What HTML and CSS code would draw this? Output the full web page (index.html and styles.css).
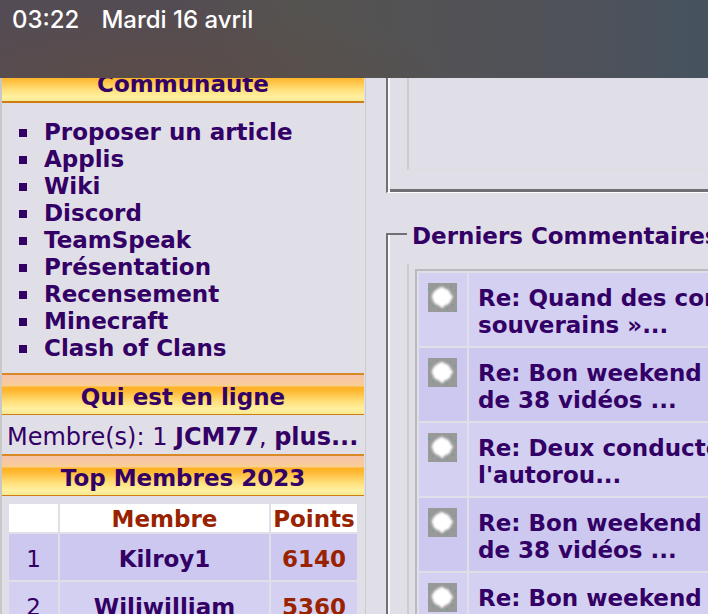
FILE: index.html
```html
<!DOCTYPE html>
<html lang="fr">
<head>
<meta charset="utf-8">
<meta name="viewport" content="width=device-width">
<title>Communauté</title>
<link rel="stylesheet" href="styles.css">
</head>
<body>
<header class="status"><time>03:22</time><span>Mardi 16 avril</span></header>
<div class="page">
  <aside class="sidebar">
    <h2 class="bar">Communauté</h2>
    <ul class="menu">
      <li><a href="#">Proposer un article</a></li>
      <li><a href="#">Applis</a></li>
      <li><a href="#">Wiki</a></li>
      <li><a href="#">Discord</a></li>
      <li><a href="#">TeamSpeak</a></li>
      <li><a href="#">Présentation</a></li>
      <li><a href="#">Recensement</a></li>
      <li><a href="#">Minecraft</a></li>
      <li><a href="#">Clash of Clans</a></li>
    </ul>
    <h2 class="bar">Qui est en ligne</h2>
    <p class="online">Membre(s): 1 <a href="#">JCM77</a>, <a href="#">plus...</a></p>
    <h2 class="bar">Top Membres 2023</h2>
    <table class="top">
      <thead><tr><th class="rank"></th><th>Membre</th><th class="points">Points</th></tr></thead>
      <tbody>
        <tr><td>1</td><td><a href="#">Kilroy1</a></td><td class="score">6140</td></tr>
        <tr><td>2</td><td><a href="#">Wiliwilliam</a></td><td class="score">5360</td></tr>
      </tbody>
    </table>
  </aside>
  <main class="content">
    <section class="panel first"><div class="inner"></div></section>
    <fieldset class="panel">
      <legend>Derniers Commentaires</legend>
      <div class="inner">
        <table class="comments">
          <tbody>
            <tr><td class="mark"><svg viewBox="0 0 29 29"><use href="#star"/></svg></td><td><a href="#">Re: Quand des con<br>souverains »...</a></td></tr>
            <tr><td class="mark"><svg viewBox="0 0 29 29"><use href="#star"/></svg></td><td><a href="#">Re: Bon weekend<br>de 38 vidéos ...</a></td></tr>
            <tr><td class="mark"><svg viewBox="0 0 29 29"><use href="#star"/></svg></td><td><a href="#">Re: Deux conducte<br>l'autorou...</a></td></tr>
            <tr><td class="mark"><svg viewBox="0 0 29 29"><use href="#star"/></svg></td><td><a href="#">Re: Bon weekend<br>de 38 vidéos ...</a></td></tr>
            <tr><td class="mark"><svg viewBox="0 0 29 29"><use href="#star"/></svg></td><td><a href="#">Re: Bon weekend</a></td></tr>
          </tbody>
        </table>
      </div>
    </fieldset>
  </main>
</div>
<svg class="defs" width="0" height="0">
  <defs>
    <filter id="soft"><feGaussianBlur stdDeviation="0.8"/></filter>
    <symbol id="star" viewBox="0 0 29 29">
      <rect width="29" height="29" fill="#999"/>
      <g fill="#7a9c9a"><path d="M0 5h2v2H0zM4 22h2v2H4zM22 3h2v2h-2zM26 7h2v2h-2zM27 27h2v2h-2zM10 25h1v2h-1zM18 25h2v2h-2zM1 19h1v2H1zM24 21h2v2h-2zM8 2h2v1H8z"/></g>
      <path d="M14 4l3 2 3 1 2 3 1 2 2 2-2 2-1 3-2 2-3 1-3 3-3-3-3-1-2-2-1-3-1-2 1-3 2-3 3-2z" fill="#fff" stroke="#eee" filter="url(#soft)"/>
    </symbol>
  </defs>
</svg>
</body>
</html>
```
FILE: styles.css
```css
* { box-sizing: border-box; }
html { overflow: hidden; }
body {
  margin: 0;
  height: 100vh;
  overflow: hidden;
  background: #e0dee7;
  color: #330066;
  font: 23px/27px Verdana, "DejaVu Sans", sans-serif;
}
a { color: inherit; font-weight: bold; text-decoration: none; }
.status {
  position: fixed;
  inset: 0 0 auto;
  z-index: 1;
  display: flex;
  gap: 22px;
  height: 78px;
  padding: 6px 12px;
  color: #fff;
  font-family: Inter, sans-serif;
  font-size: 24px;
  font-weight: 500;
  background:
    radial-gradient(ellipse 45% 100% at 20% 100%, rgba(92, 76, 70, .8), transparent),
    linear-gradient(to right, #534c56, #544c53 25%, #555350 42%, #525256 65%, #4e525a 85%, #45535f);
}
.page { display: flex; padding-top: 61px; }
.sidebar {
  flex: 0 0 366px;
  min-height: 100vh;
  border-left: 2px solid #c8c8c8;
  border-right: 1px solid #ccc;
  padding-right: 1px;
}
.bar {
  margin: 0;
  height: 42px;
  padding-top: 9px;
  border-top: 2px solid #d98a26;
  border-bottom: 1px solid #cf7d12;
  background: linear-gradient(#f6c3a9, #f7cb9d 8px, #f9cf91 11px, #ffb223 12px, #ffb832 16px, #ffe07c 27px, #fff0a0 34px, #f5e991 39px);
  text-align: center;
  font-size: 23px;
}
.bar:first-child { padding-top: 8px; border-bottom-width: 2px; }
.menu {
  margin: 0;
  padding: 16px 0 11px 42px;
  list-style: none;
}
.menu li { display: flex; align-items: center; }
.menu li::before {
  content: "";
  width: 8px;
  height: 8px;
  margin-left: -25px;
  margin-right: 17px;
  background: #330066;
}
.online { margin: 0; padding: 9px 5px 3px; font-size: 24px; white-space: nowrap; }
.top {
  width: calc(100% - 10px);
  margin: 6px 5px 0;
  border-spacing: 2px;
  table-layout: fixed;
  text-align: center;
}
.top th { height: 28px; padding: 2px 0 0; background: #fff; color: #992200; line-height: 26px; }
.top td { height: 46px; padding: 4px 0 0; background: #ccc8ef; }
.top tr:nth-child(2) td { background: #d4d0f1; }
.top .rank { width: 49px; }
.top .points { width: 86px; }
.top .score { color: #992200; font-weight: bold; }
.content { flex: 1; min-width: 0; padding-left: 20px; }
.panel {
  min-width: 0;
  margin: 0 -24px 24px 0;
  border: 2px solid;
  border-color: #707074 #fff #fff #707074;
  box-shadow: inset 2px 0 #fafafa;
}
.first {
  padding: 0 0 22px 19px;
  border-bottom-width: 1px;
  box-shadow: inset 2px 0 #fafafa, inset 0 -3px #707074;
}
.inner { border-left: 2px solid #ccc; }
.first .inner { height: 107px; border-bottom: 1px solid #dcdcdc; }
.panel legend { margin: 0; padding: 6px 5px 0; font-weight: bold; white-space: nowrap; }
fieldset.panel { padding: 14px 0 0 19px; }
fieldset .inner { padding: 5px 0 0 6px; }
.comments {
  width: 100%;
  border: 2px solid #bbbabf;
  border-spacing: 2px;
}
.comments td {
  height: 73px;
  padding: 12px 0 7px 9px;
  vertical-align: top;
  background: #d4d0f1;
  white-space: nowrap;
}
.comments tr:nth-child(even) td { background: #ccc8ef; }
.comments td.mark { width: 48px; padding-top: 10px; }
.mark svg { display: block; width: 29px; height: 29px; }
.defs { position: absolute; }
```
